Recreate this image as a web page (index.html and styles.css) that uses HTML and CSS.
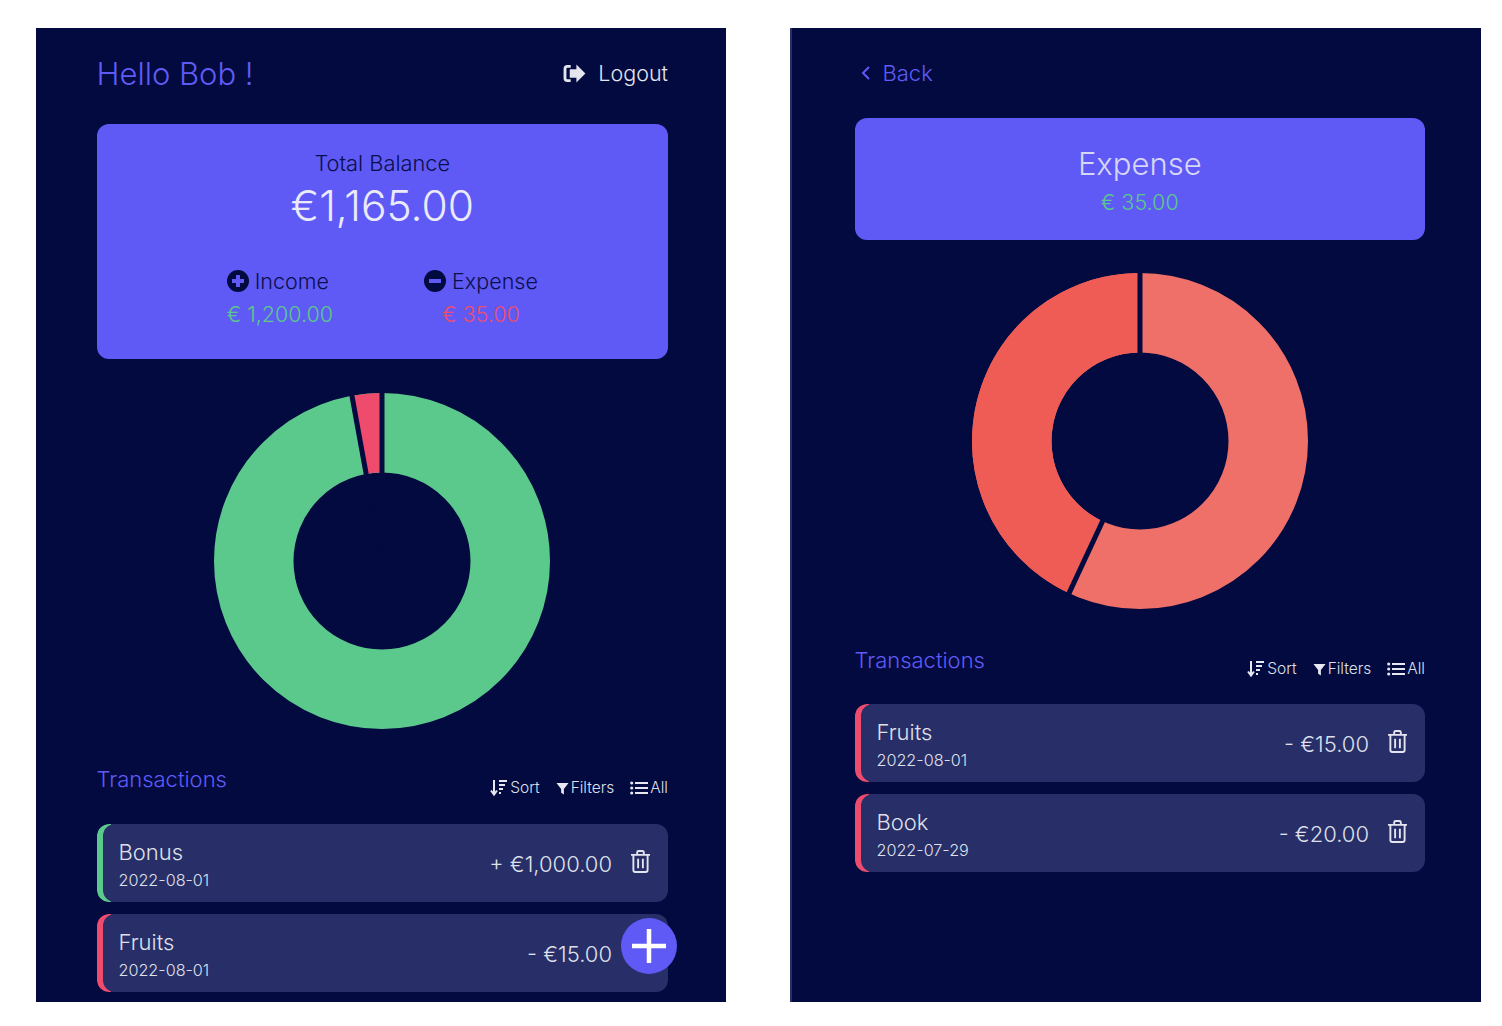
FILE: index.html
```html
<!DOCTYPE html>
<html lang="en">
<head>
<meta charset="utf-8">
<title>Budget</title>
<link rel="stylesheet" href="styles.css">
</head>
<body>
<svg class="defs" width="0" height="0" aria-hidden="true">
  <defs>
    <symbol id="i-sort" viewBox="0 0 18 18">
      <path d="M4 1v14M1 11.500l3 4 3-4" fill="none" stroke="currentColor" stroke-width="2"/>
      <path d="M9 2h8M9 6h6M9 10h4M9 14h2" fill="none" stroke="currentColor" stroke-width="2"/>
    </symbol>
    <symbol id="i-filter" viewBox="0 0 14 14">
      <path d="M.5 1h13L8.500 7.500V13.500L5.500 11.500V7.500z" fill="currentColor"/>
    </symbol>
    <symbol id="i-list" viewBox="0 0 18 14">
      <circle cx="1.700" cy="2" r="1.600" fill="currentColor"/>
      <circle cx="1.700" cy="7" r="1.600" fill="currentColor"/>
      <circle cx="1.700" cy="12" r="1.600" fill="currentColor"/>
      <path d="M5 2h13M5 7h13M5 12h13" stroke="currentColor" stroke-width="1.800" fill="none"/>
    </symbol>
    <symbol id="i-trash" viewBox="0 0 20 24">
      <path d="M0 5h20M6.500 5V2.500q0-1.500 1.500-1.500h4q1.500 0 1.500 1.500V5M2.500 5v16q0 2 2 2h11q2 0 2-2V5M7.500 9v10M12.500 9v10" fill="none" stroke="currentColor" stroke-width="2"/>
    </symbol>
  </defs>
</svg>
<main class="page">
  <section class="panel panel-home">
    <header class="top">
      <h1 class="hello">Hello Bob !</h1>
      <a class="logout">
        <svg class="logout-icon" viewBox="0 0 24 20"><path d="M8 2.500H4.500Q2 2.500 2 5v10q0 2.500 2.500 2.500H8" fill="none" stroke="currentColor" stroke-width="3"/><path d="M14 0.500 23.500 10 14 19.500V14.500H7V5.500H14z" fill="currentColor"/></svg>
        <span>Logout</span>
      </a>
    </header>
    <div class="card card-balance">
      <div class="balance-label">Total Balance</div>
      <div class="balance-value">€1,165.00</div>
      <div class="split">
        <div class="split-col">
          <div class="split-head split-head-income">
            <svg class="split-icon" viewBox="0 0 22 22"><circle cx="11" cy="11" r="11" fill="#020a40"/><path d="M11 5v12M5 11h12" stroke="#5f5af6" stroke-width="4"/></svg>
            <span>Income</span>
          </div>
          <div class="split-value green">€ 1,200.00</div>
        </div>
        <div class="split-col">
          <div class="split-head">
            <svg class="split-icon" viewBox="0 0 22 22"><circle cx="11" cy="11" r="11" fill="#020a40"/><path d="M5 11h12" stroke="#5f5af6" stroke-width="4"/></svg>
            <span>Expense</span>
          </div>
          <div class="split-value red">€ 35.00</div>
        </div>
      </div>
    </div>
    <svg class="donut" viewBox="0 0 340 340">
      <circle class="ring ring-green" cx="170" cy="170" r="128.250"/>
      <circle class="ring ring-red seg-red" cx="170" cy="170" r="128.250" pathLength="360" stroke-dasharray="10.300 349.700"/>
      <path class="gap" d="M170 170V-2"/>
      <path class="gap" d="M170 170L139.200 0.800"/>
    </svg>
    <div class="tx-head tx-head-home">
      <h2 class="tx-title">Transactions</h2>
      <div class="tx-actions">
        <span class="tx-action"><svg class="ic-sort"><use href="#i-sort"/></svg>Sort</span>
        <span class="tx-action"><svg class="ic-filter"><use href="#i-filter"/></svg>Filters</span>
        <span class="tx-action"><svg class="ic-list"><use href="#i-list"/></svg>All</span>
      </div>
    </div>
    <div class="row row-in">
      <div class="row-text"><div class="row-name">Bonus</div><div class="row-date">2022-08-01</div></div>
      <div class="row-amount">+ €1,000.00</div>
      <svg class="ic-trash"><use href="#i-trash"/></svg>
    </div>
    <div class="row row-out">
      <div class="row-text"><div class="row-name">Fruits</div><div class="row-date">2022-08-01</div></div>
      <div class="row-amount">- €15.00</div>
      <svg class="ic-trash"><use href="#i-trash"/></svg>
    </div>
    <button class="fab" aria-label="Add"><svg viewBox="0 0 36 36"><path d="M18 1v34M1 18h34" stroke="#fff" stroke-width="4.500"/></svg></button>
  </section>

  <section class="panel panel-detail">
    <a class="back">
      <svg class="back-icon" viewBox="0 0 10 16"><path d="M8 2 2 8l6 6" fill="none" stroke="currentColor" stroke-width="2"/></svg>
      <span>Back</span>
    </a>
    <div class="card card-expense">
      <div class="expense-label">Expense</div>
      <div class="expense-value">€ 35.00</div>
    </div>
    <svg class="donut donut-detail" viewBox="0 0 340 340">
      <circle class="ring ring-pale" cx="170" cy="170" r="128.250"/>
      <circle class="ring ring-dark seg-dark" cx="170" cy="170" r="128.250" pathLength="360" stroke-dasharray="155 205"/>
      <path class="gap" d="M170 170V-2"/>
      <path class="gap" d="M170 170L97.300 325.900"/>
    </svg>
    <div class="tx-head tx-head-detail">
      <h2 class="tx-title">Transactions</h2>
      <div class="tx-actions">
        <span class="tx-action"><svg class="ic-sort"><use href="#i-sort"/></svg>Sort</span>
        <span class="tx-action"><svg class="ic-filter"><use href="#i-filter"/></svg>Filters</span>
        <span class="tx-action"><svg class="ic-list"><use href="#i-list"/></svg>All</span>
      </div>
    </div>
    <div class="row row-out">
      <div class="row-text"><div class="row-name">Fruits</div><div class="row-date">2022-08-01</div></div>
      <div class="row-amount">- €15.00</div>
      <svg class="ic-trash"><use href="#i-trash"/></svg>
    </div>
    <div class="row row-out">
      <div class="row-text"><div class="row-name">Book</div><div class="row-date">2022-07-29</div></div>
      <div class="row-amount">- €20.00</div>
      <svg class="ic-trash"><use href="#i-trash"/></svg>
    </div>
  </section>
</main>
</body>
</html>
```

FILE: styles.css
```css
* { box-sizing: border-box; }
html, body { margin: 0; height: 100%; }
body { background: #fff; font-family: Inter, "Liberation Sans", sans-serif; font-weight: 350; overflow: hidden; }
.defs { position: absolute; }
.page { display: flex; gap: 64px; padding: 28px 21px 24px 36px; }
.panel { position: relative; height: 974px; background: #020a40; overflow: hidden; }
.panel-home { width: 690px; padding: 0 58px 0 60.500px; }
.panel-detail { width: 691px; padding: 0 56px 0 62.500px; border-left: 2px solid #272e68; }

.top { display: flex; justify-content: space-between; align-items: center; height: 36px; margin: 28px 0 32px; }
.hello { margin: 0; font-size: 31px; line-height: 36px; font-weight: 350; color: #5f5af6; }
.logout { display: flex; align-items: center; gap: 12px; margin-top: -2px; font-size: 21.500px; color: #e4e5ee; }
.logout-icon { width: 23px; height: 19px; }

.card { background: #5f5af6; border-radius: 12px; text-align: center; }
.card-balance { height: 235px; padding-top: 26px; }
.balance-label { font-size: 21.800px; line-height: 26px; color: #0a0f4c; }
.balance-value { margin-top: 3px; font-size: 42.500px; line-height: 53px; color: #eaeafa; }
.split { display: flex; justify-content: center; gap: 91px; margin-top: 35px; }
.split-col { display: flex; flex-direction: column; align-items: center; }
.split-head { display: flex; align-items: center; gap: 6px; font-size: 21.500px; line-height: 28px; color: #0a0f4c; }
.split-head-income { margin-right: 4px; }
.split-icon { width: 22px; height: 22px; }
.split-value { margin-top: 5px; font-size: 21.500px; line-height: 28px; }
.green { color: #5bc98a; }
.red { color: #ee4d6b; }

.donut { display: block; width: 340px; height: 340px; margin: 32px auto 0; }
.ring { fill: none; stroke-width: 79.500; }
.ring-green { stroke: #5cc98c; }
.ring-red { stroke: #ef4b6c; }
.ring-pale { stroke: #ef7068; }
.ring-dark { stroke: #ee5c55; }
.seg-red { transform: rotate(-100.300deg); transform-origin: 170px 170px; }
.seg-dark { transform: rotate(115deg); transform-origin: 170px 170px; }
.gap { stroke: #020a40; stroke-width: 5; fill: none; }

.tx-head { display: flex; justify-content: space-between; align-items: flex-start; }
.tx-head-home { margin-top: 34px; height: 59px; }
.tx-head-detail { margin-top: 35px; height: 58px; }
.tx-title { margin: 0; font-size: 22px; line-height: 28px; font-weight: 350; color: #5f5af6; }
.tx-actions { display: flex; gap: 16px; margin-top: 13px; }
.tx-action { display: flex; align-items: center; gap: 2px; font-size: 15.500px; line-height: 20px; color: #dfe0ea; }
.tx-action svg { color: #e6e7f0; }
.ic-sort { width: 18px; height: 18px; }
.ic-filter { width: 13px; height: 13px; }
.ic-list { width: 18px; height: 14px; }

.row { position: relative; display: flex; align-items: center; height: 78px; margin-bottom: 12px; padding: 0 18px 0 22px; background: #272e68; border-radius: 12px; color: #dfe0ea; overflow: hidden; }
.row::before { content: ""; position: absolute; left: 6px; top: 0; bottom: 0; width: 14px; background: #272e68; border-radius: 12px 0 0 12px; }
.row-in::before { box-shadow: -6px 0 0 #5cc98c; }
.row-out::before { box-shadow: -6px 0 0 #ef4b6c; }
.row-text { flex: 1; padding-top: 2px; }
.row-name { font-size: 22px; line-height: 28px; }
.row-date { font-size: 16.200px; line-height: 22px; margin-top: 3px; }
.row-amount { font-size: 22px; line-height: 28px; margin-top: 2px; margin-right: 19px; }
.ic-trash { width: 19px; height: 23px; margin-top: -4px; color: #e4e5ee; }

.fab { position: absolute; left: 585px; top: 890px; width: 56px; height: 56px; padding: 10px; border: 0; border-radius: 50%; background: #5f5af6; }
.fab svg { display: block; width: 36px; height: 36px; }

.back { display: flex; align-items: center; gap: 12px; height: 28px; margin: 31px 0 31px; font-size: 22px; color: #5f5af6; }
.back-icon { width: 10px; height: 16px; margin-left: 6px; }
.card-expense { height: 122px; padding-top: 26px; }
.expense-label { font-size: 31px; line-height: 40px; color: #d6d6f5; }
.expense-value { margin-top: 4px; font-size: 21.500px; line-height: 28px; color: #5bc98a; }
.donut-detail { margin-top: 31px; }
```
